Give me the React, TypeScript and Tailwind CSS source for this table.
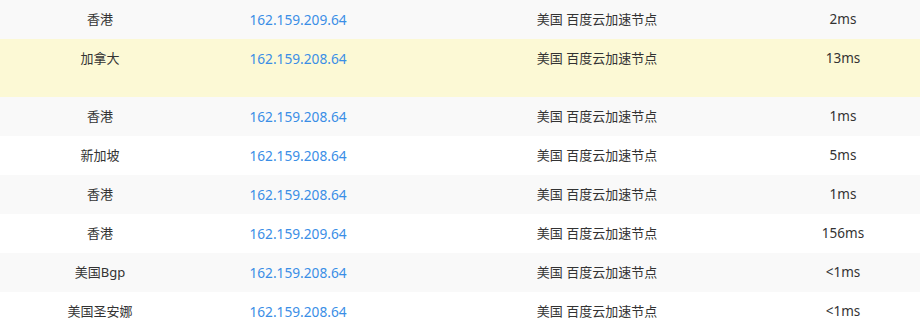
import React from "react";

const rows = [
  { a: "香港", ip: "162.159.209.64", loc: "美国 百度云加速节点", ms: "2ms", bg: "bg-[#f9f9f9]" },
  { a: "加拿大", ip: "162.159.208.64", loc: "美国 百度云加速节点", ms: "13ms", bg: "bg-[#fcf9d5]", tall: true },
  { a: "香港", ip: "162.159.208.64", loc: "美国 百度云加速节点", ms: "1ms", bg: "bg-[#f9f9f9]" },
  { a: "新加坡", ip: "162.159.208.64", loc: "美国 百度云加速节点", ms: "5ms", bg: "bg-white" },
  { a: "香港", ip: "162.159.208.64", loc: "美国 百度云加速节点", ms: "1ms", bg: "bg-[#f9f9f9]" },
  { a: "香港", ip: "162.159.209.64", loc: "美国 百度云加速节点", ms: "156ms", bg: "bg-white" },
  { a: "美国Bgp", ip: "162.159.208.64", loc: "美国 百度云加速节点", ms: "<1ms", bg: "bg-[#f9f9f9]" },
  { a: "美国圣安娜", ip: "162.159.208.64", loc: "美国 百度云加速节点", ms: "<1ms", bg: "bg-white" },
];

export default function App() {
  return (
    <div
      className="w-[920px] h-[330px] overflow-hidden bg-white text-[13px] text-[#333]"
      style={{ fontFamily: '"Noto Sans", "Noto Sans CJK SC", sans-serif' }}
    >
      {rows.map((r, i) => (
        <div
          key={i}
          className={`grid grid-cols-[200px_196px_402px_90px_1fr] ${r.bg} ${r.tall ? "h-[58px]" : "h-[39px]"}`}
        >
          <div className="text-center leading-[39px]">{r.a}</div>
          <div className="text-center leading-[39px] text-[13.7px] text-[#3a8ee6]">{r.ip}</div>
          <div className="text-center leading-[39px]">{r.loc}</div>
          <div className="text-center leading-[39px] text-[13.5px]">{r.ms}</div>
          <div />
        </div>
      ))}
    </div>
  );
}
